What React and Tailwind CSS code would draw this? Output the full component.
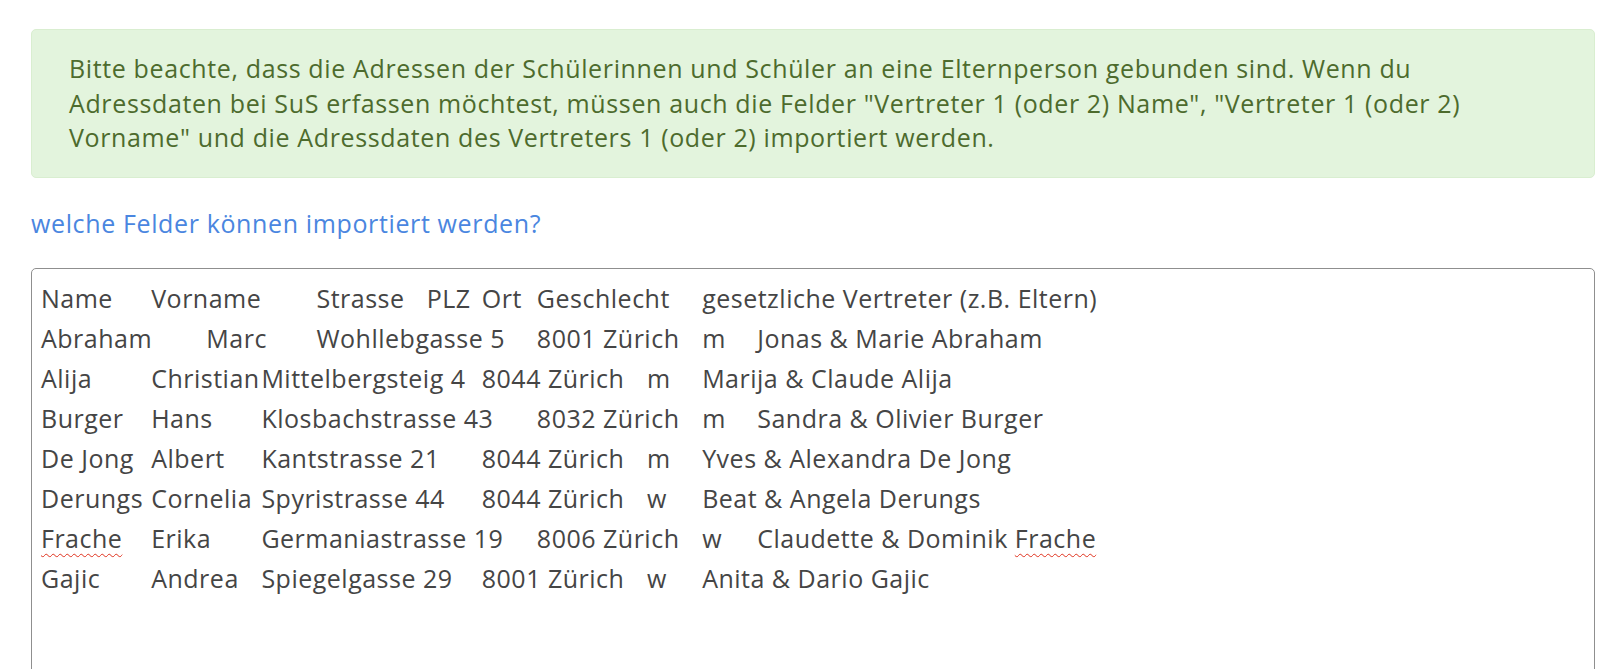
import React from 'react';

const col = {
  1: 'col-start-1',
  3: 'col-start-3',
  4: 'col-start-4',
  5: 'col-start-5',
  6: 'col-start-6',
  8: 'col-start-8',
  9: 'col-start-9',
  10: 'col-start-10',
  12: 'col-start-12',
  13: 'col-start-13',
  14: 'col-start-14',
};

const Typo = ({ children }) => (
  <span className="underline decoration-wavy decoration-[#e0321e] decoration-1 underline-offset-[5px]">{children}</span>
);

const rows = [
  [['Name', 1], ['Vorname', 3], ['Strasse', 6], ['PLZ', 8], ['Ort', 9], ['Geschlecht', 10], ['gesetzliche Vertreter (z.B. Eltern)', 13]],
  [['Abraham', 1], ['Marc', 4], ['Wohllebgasse 5', 6], ['8001 Zürich', 10], ['m', 13], ['Jonas & Marie Abraham', 14]],
  [['Alija', 1], ['Christian', 3], ['Mittelbergsteig 4', 5], ['8044 Zürich', 9], ['m', 12], ['Marija & Claude Alija', 13]],
  [['Burger', 1], ['Hans', 3], ['Klosbachstrasse 43', 5], ['8032 Zürich', 10], ['m', 13], ['Sandra & Olivier Burger', 14]],
  [['De Jong', 1], ['Albert', 3], ['Kantstrasse 21', 5], ['8044 Zürich', 9], ['m', 12], ['Yves & Alexandra De Jong', 13]],
  [['Derungs', 1], ['Cornelia', 3], ['Spyristrasse 44', 5], ['8044 Zürich', 9], ['w', 12], ['Beat & Angela Derungs', 13]],
  [[<Typo>Frache</Typo>, 1], ['Erika', 3], ['Germaniastrasse 19', 5], ['8006 Zürich', 10], ['w', 13], [<>Claudette &amp; Dominik <Typo>Frache</Typo></>, 14]],
  [['Gajic', 1], ['Andrea', 3], ['Spiegelgasse 29', 5], ['8001 Zürich', 9], ['w', 12], ['Anita & Dario Gajic', 13]],
];

export default function App() {
  return (
    <div className="min-h-screen bg-white pl-[31px] pr-[25px] pt-[29px] font-['Open_Sans',sans-serif] text-[25px] tracking-[0.63px] overflow-hidden">
      {/* hint */}
      <div className="rounded-[5px] border border-[#d9eed0] bg-[#e3f4dd] px-[37px] pt-[21px] pb-[22px] leading-[34.5px] text-[#4d6b2d]">
        Bitte beachte, dass die Adressen der Schülerinnen und Schüler an eine Elternperson gebunden sind. Wenn du
        <br />
        Adressdaten bei SuS erfassen möchtest, müssen auch die Felder "Vertreter 1 (oder 2) Name", "Vertreter 1 (oder 2)
        <br />
        Vorname" und die Adressdaten des Vertreters 1 (oder 2) importiert werden.
      </div>

      <div className="mt-[28px] leading-[34px] text-[#4a86e0]">
        <a href="#felder" className="hover:underline">welche Felder können importiert werden?</a>
      </div>

      {/* paste area */}
      <div className="mt-[28px] h-[430px] rounded-[5px] border border-[#8f8f8f] bg-white pl-[9px] pt-[9px] leading-[40px] tracking-[0.5px] text-[#454545]">
        {rows.map((cells, i) => (
          <div key={i} className="grid grid-cols-[repeat(20,55.1px)] whitespace-pre">
            {cells.map(([text, c], j) => (
              <span key={j} className={`${col[c]} row-start-1`}>{text}</span>
            ))}
          </div>
        ))}
      </div>
    </div>
  );
}
